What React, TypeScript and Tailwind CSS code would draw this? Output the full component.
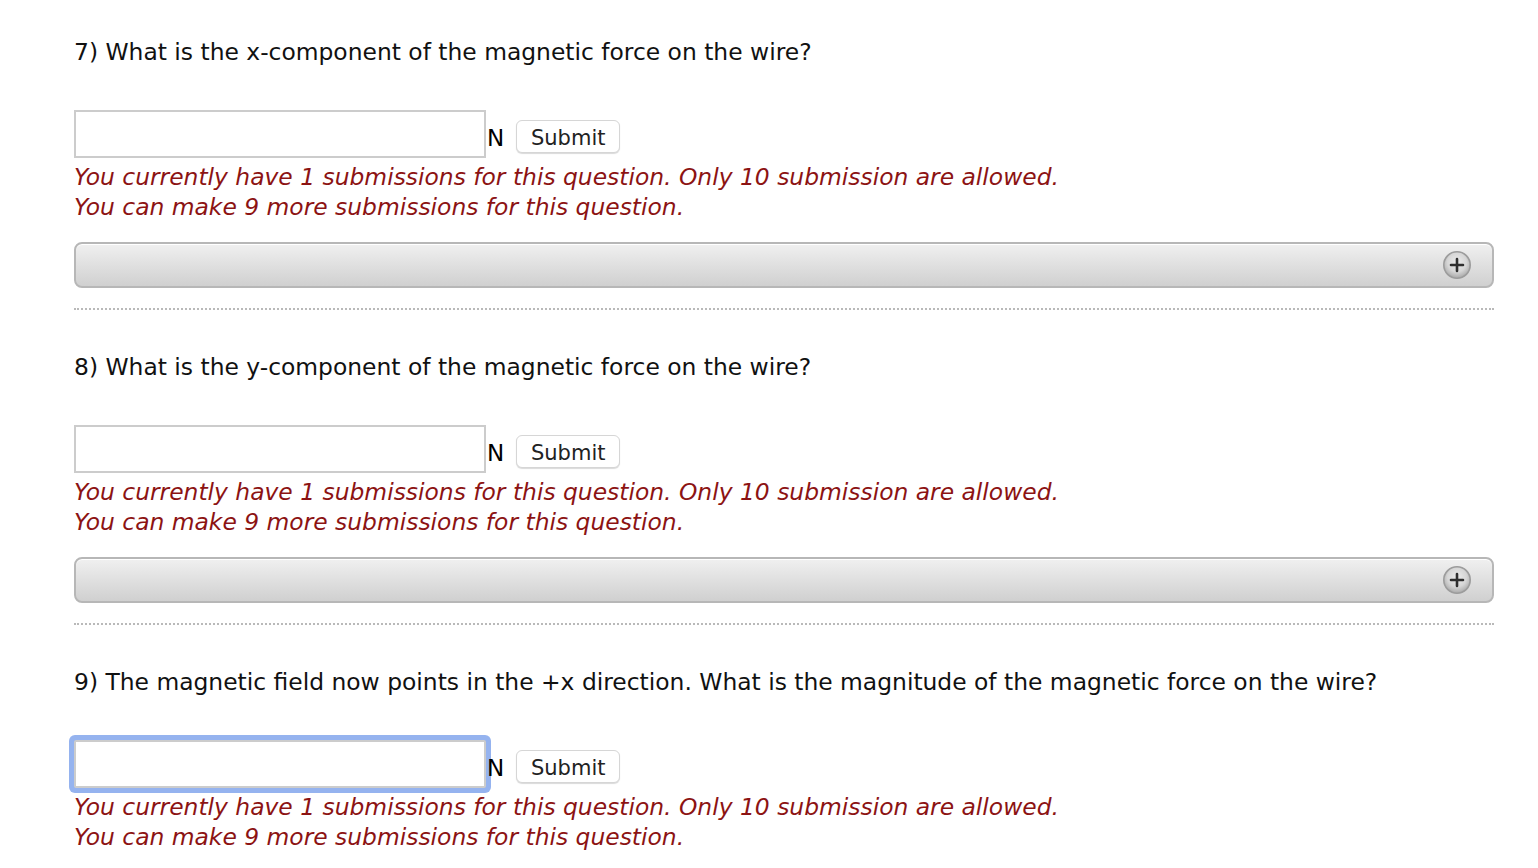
import React from "react";

const questions = [
  { n: 7, text: "What is the x-component of the magnetic force on the wire?", focused: false, last: false },
  { n: 8, text: "What is the y-component of the magnetic force on the wire?", focused: false, last: false },
  {
    n: 9,
    text: "The magnetic field now points in the +x direction. What is the magnitude of the magnetic force on the wire?",
    focused: true,
    last: true,
  },
];

function PlusIcon() {
  return (
    <svg width="30" height="30" viewBox="0 0 30 30">
      <defs>
        <radialGradient id="pg" cx="50%" cy="40%" r="60%">
          <stop offset="0%" stopColor="#ececec" />
          <stop offset="60%" stopColor="#d6d6d6" />
          <stop offset="100%" stopColor="#a8a8a8" />
        </radialGradient>
      </defs>
      <circle cx="15" cy="15" r="13.2" fill="url(#pg)" stroke="#9c9c9c" strokeWidth="1.6" />
      <path d="M15 9v12M9 15h12" stroke="#2f2f2f" strokeWidth="2.6" strokeLinecap="round" />
    </svg>
  );
}

function Question({ n, text, focused, last }: { n: number; text: string; focused: boolean; last: boolean }) {
  return (
    <div>
      <div className="h-[30px] leading-[30px] text-[23.4px] text-[#111]">
        {n}) {text}
      </div>

      <div className="mt-[43px] flex items-center">
        <input
          type="text"
          className={`h-[48px] w-[412px] border-2 border-[#cccccc] bg-white outline-none ${
            focused ? "rounded-[2px] shadow-[0_0_0_5px_#95b3ef]" : ""
          }`}
        />
        <span className="mt-[8px] ml-[1px] text-[23px] leading-none text-black">N</span>
        <button className="mt-[5px] ml-[12px] h-[33px] w-[104px] rounded-[6px] border border-[#d6d6d6] bg-white pt-[4px] text-[21px] leading-none text-[#222] shadow-[0_1px_1px_rgba(0,0,0,0.15)]">
          Submit
        </button>
      </div>

      <div className="mt-[4px] text-[23.4px] italic leading-[30px] text-[#8c1313]">
        <div>You currently have 1 submissions for this question. Only 10 submission are allowed.</div>
        <div>You can make 9 more submissions for this question.</div>
      </div>

      {!last && (
        <>
          <div className="mt-[20px] flex h-[46px] items-center justify-end rounded-[8px] border-2 border-[#b7b7b7] bg-gradient-to-b from-[#f0f0f0] to-[#d0d0d0] pr-[20px] shadow-[inset_0_1px_0_#ffffff]">
            <PlusIcon />
          </div>
          <div className="mt-[20px] border-t-2 border-dotted border-[#b9b9b9]" />
          <div className="h-[42px]" />
        </>
      )}
    </div>
  );
}

export default function App() {
  return (
    <div
      className="min-h-screen bg-white pl-[74px] pt-[37px]"
      style={{ fontFamily: '"DejaVu Sans", Verdana, sans-serif' }}
    >
      <div className="w-[1420px]">
        {questions.map((q) => (
          <Question key={q.n} {...q} />
        ))}
      </div>
    </div>
  );
}
